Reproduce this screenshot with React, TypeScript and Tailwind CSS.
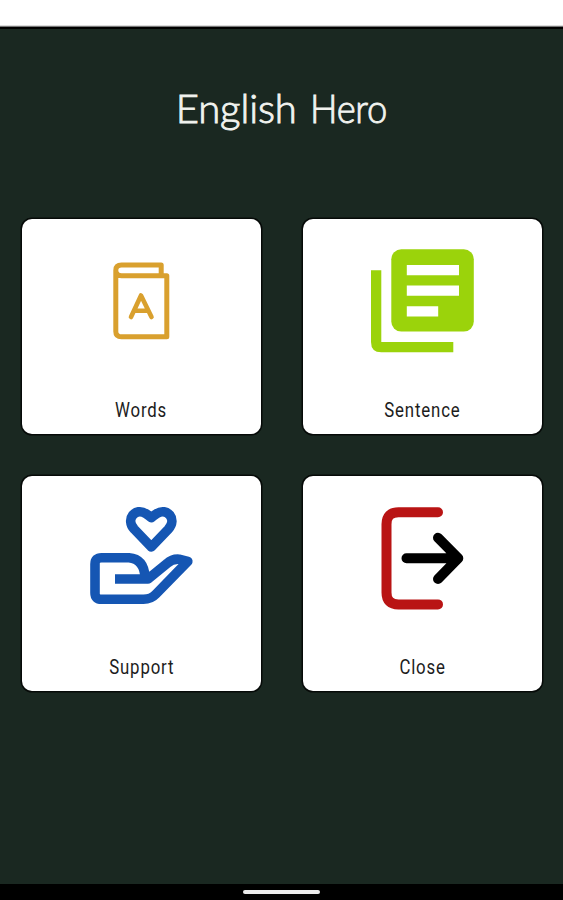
import type { ReactNode } from "react";

type MenuItem = {
  label: string;
  icon: ReactNode;
};

const iconClassName = "h-[120px] w-[121px] shrink-0";

function WordsIcon() {
  return (
    <svg
      viewBox="0 0 121 120"
      fill="none"
      stroke="#d9a02e"
      strokeWidth="5"
      strokeLinejoin="round"
      className={iconClassName}
    >
      <path d="M80.2 35.7V25H40.5Q34.8 25 34.8 30.3V91.4Q34.8 96.7 40.5 96.7H85.8V35.7H40.5Q34.8 35.7 34.8 30.3" />
      <path
        d="M50 77L60 55.5L70.5 77M53.5 70.8H67"
        strokeWidth="4.6"
        strokeLinecap="round"
      />
    </svg>
  );
}

function SentenceIcon() {
  return (
    <svg viewBox="0 0 121 120" fill="#9bd30b" className={iconClassName}>
      <path d="M9 30.2H19.3V102H91.3V112.3H19.3Q9 112.3 9 102Z" />
      <rect x="29.3" y="9.3" width="82.5" height="82.3" rx="10" />
      <path
        fill="#fff"
        d="M44.8 25H97V35.3H44.8ZM44.8 45.5H97V55.8H44.8ZM44.8 66.2H76.2V76.6H44.8Z"
      />
    </svg>
  );
}

function SupportIcon() {
  return (
    <svg
      viewBox="0 0 121 120"
      fill="none"
      stroke="#1556b3"
      strokeWidth="9.6"
      strokeLinejoin="round"
      className={iconClassName}
    >
      <path d="M70.3 50L53.3 32.3C44 22 54.5 10 65 16.7Q68 18.3 70.3 20.8Q72.6 18.3 75.6 16.7C86 10 96.6 22 87.3 32.3Z" />
      <path d="M34 82H67L86 66.5Q91 61.8 98 62.2L106.8 64.3L75 97Q70 102.3 62.5 102.3H20.5Q14 102.3 14 96V67Q14 60.7 20.5 60.7H48Q63 62 64 80" />
    </svg>
  );
}

function CloseIcon() {
  return (
    <svg
      viewBox="0 0 121 120"
      fill="none"
      strokeWidth="10"
      strokeLinecap="round"
      strokeLinejoin="round"
      className={iconClassName}
    >
      <path
        stroke="#b91414"
        d="M76 15.2H36.5Q24.5 15.2 24.5 27.2V95.4Q24.5 107.4 36.5 107.4H76"
      />
      <path stroke="#000" d="M44.5 61.3H96M76 40.8L96.3 61.3L76 82" />
    </svg>
  );
}

const menuItems: MenuItem[] = [
  { label: "Words", icon: <WordsIcon /> },
  { label: "Sentence", icon: <SentenceIcon /> },
  { label: "Support", icon: <SupportIcon /> },
  { label: "Close", icon: <CloseIcon /> },
];

export default function App() {
  return (
    <div className="flex h-[900px] w-[563px] flex-col overflow-hidden bg-[#1a2821]">
      {/* Status bar */}
      <div className="h-[26px] shrink-0 border-b border-[#dcdcdc] bg-white" />
      <div className="h-[3px] shrink-0 border-t border-[#777] bg-black" />

      <main className="flex flex-1 flex-col">
        <h1 className="h-[190px] pt-[52px] pl-[7px] text-center font-['Lato',sans-serif] text-[40px] leading-[54px] font-light text-[#f1f3ef] [-webkit-text-stroke:0.9px_#f1f3ef]">
          <span className="tracking-[-0.1px]">English</span>{" "}
          <span className="ml-0.5 inline-block origin-left scale-x-[0.91] tracking-[-0.3px]">
            Hero
          </span>
        </h1>

        {/* Menu */}
        <div className="grid grid-cols-2 gap-[42px] px-[21.5px]">
          {menuItems.map((item) => (
            <button
              key={item.label}
              type="button"
              className="flex h-[215px] flex-col items-center rounded-[10px] bg-white pt-[21px] shadow-[0_0_0_1.5px_#060a08]"
            >
              {item.icon}
              <span className="mt-[37px] ml-px scale-x-[0.84] font-['Roboto',sans-serif] text-[20px] leading-[26px] tracking-[1px] text-[#1c1c1c]">
                {item.label}
              </span>
            </button>
          ))}
        </div>
      </main>

      {/* Gesture bar */}
      <div className="flex h-4 shrink-0 items-center justify-center bg-black">
        <div className="h-1 w-[77px] rounded-full bg-[#ececec]" />
      </div>
    </div>
  );
}
